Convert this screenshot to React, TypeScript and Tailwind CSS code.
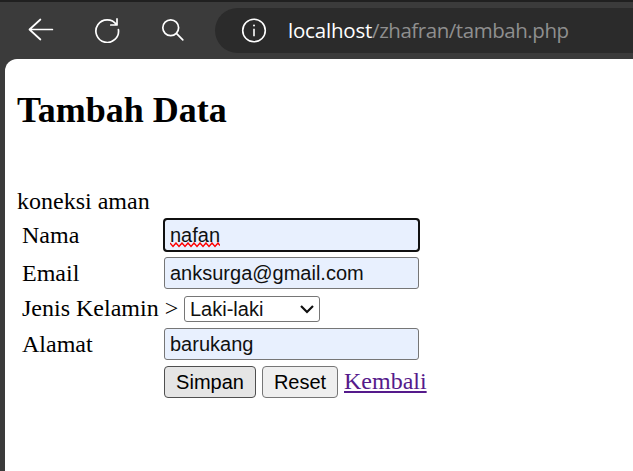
import type { ReactNode } from "react";

const serif = "font-['Liberation_Serif','Times_New_Roman',serif]";
const sans = "font-['Liberation_Sans',Arial,sans-serif]";

function Toolbar() {
  return (
    <header className="flex h-[59px] shrink-0 items-start border-t-2 border-[#202020] bg-[#3b3b3b] pt-[6px]">
      <div className="flex h-[45px] w-[215px] shrink-0 items-center">
        <svg className="mb-px ml-[28px] h-6 w-[26px] shrink-0" viewBox="0 0 26 24" fill="none" stroke="#fff" strokeWidth="1.7" strokeLinecap="round" strokeLinejoin="round">
          <path d="M24.4 11.5H1.5M12.4 1.5 1.5 11.5l10.9 10" />
        </svg>
        <svg className="mb-px ml-[40px] h-[26px] w-[26px] shrink-0" viewBox="0 -0.5 26 26" fill="none" stroke="#fff" strokeWidth="1.7" strokeLinecap="round" strokeLinejoin="round">
          <path d="M24.4 12A11.3 11.3 0 1 1 22.5 7.2M23 1.4v6.1h-6.2" />
        </svg>
        <svg className="mb-px ml-[41px] h-6 w-6 shrink-0" viewBox="0 0 24 24" fill="none" stroke="#fff" strokeWidth="1.7" strokeLinecap="round">
          <circle cx="9.7" cy="9.7" r="7.9" />
          <path d="m15.4 15.4 6.4 6.4" />
        </svg>
      </div>
      <div className="flex h-[45px] flex-1 items-center rounded-l-full bg-[#2b2b2b] whitespace-nowrap">
        <svg className="mb-px ml-[26px] h-[26px] w-[26px] shrink-0" viewBox="0 -0.5 26 26" fill="none" stroke="#fff" strokeWidth="1.6">
          <circle cx="13" cy="13" r="11.3" />
          <path d="M13 11.2v7.6" />
          <circle cx="13" cy="7.9" r="1" fill="#fff" stroke="none" />
        </svg>
        <span className="mb-[2px] ml-[21px] font-['Open_Sans','Noto_Sans',sans-serif] text-[20.5px] leading-[30px] tracking-[-0.45px] text-[#8f8f8f]">
          <span className="tracking-[-0.2px] text-white">localhost</span>/zhafran/tambah.php
        </span>
      </div>
    </header>
  );
}

function Row({ label, children }: { label: string; children: ReactNode }) {
  return (
    <div className="flex h-8 items-center">
      <span className="w-[142px] shrink-0">{label}</span>
      {children}
    </div>
  );
}

const field = `${sans} h-8 w-[255px] rounded-[3px] border border-[#767676] bg-[#e8f0fe] px-[5px] text-[20px] leading-[26px] text-[#101010]`;
const button = `${sans} h-8 rounded-[4px] border text-[20px] leading-[28px] text-black`;

export default function App() {
  return (
    <div className="flex h-[471px] w-[633px] flex-col overflow-hidden bg-[#3b3b3b]">
      <Toolbar />
      <main className={`${serif} ml-[5px] flex-1 rounded-tl-[12px] bg-white pl-[12px] text-[24px] leading-[28px] text-black`}>
        <h2 className="pt-[31px] text-[36px] leading-[41px] font-bold">Tambah Data</h2>
        <p className="mt-[56px] h-[32px]">koneksi aman</p>
        <form className="flex flex-col gap-[6px] pl-[5px]">
          <Row label="Nama">
            <div className="relative">
              <input className={`${field} block outline-2 -outline-offset-1 outline-[#101010]`} defaultValue="nafan" spellCheck={false} />
              <svg className="absolute top-[23px] left-[6px] h-[6px] w-[50px]" viewBox="0 0 50 6" fill="none" stroke="#f00" strokeWidth="1.4">
                <path d="M0 1l3 3.5L6 1l3 3.5L12 1l3 3.5L18 1l3 3.5L24 1l3 3.5L30 1l3 3.5L36 1l3 3.5L42 1l3 3.5L48 1l2 2.5" />
              </svg>
            </div>
          </Row>
          <Row label="Email">
            <input className={field} defaultValue="anksurga@gmail.com" />
          </Row>
          <div className="flex h-[27px] items-end">
            <span className="w-[162px] shrink-0 whitespace-nowrap">Jenis Kelamin &gt;</span>
            <div className="relative">
              <select className={`${sans} block h-[26px] w-[136px] appearance-none rounded-[3px] border border-[#767676] bg-white pl-[5px] text-[20px] leading-[24px] text-[#101010]`}>
                <option>Laki-laki</option>
                <option>Perempuan</option>
              </select>
              <svg className="pointer-events-none absolute top-[9px] right-[6px] h-[9px] w-[14px]" viewBox="0 0 14 9" fill="none" stroke="#101010" strokeWidth="2.2">
                <path d="m1 1 6 6 6-6" />
              </svg>
            </div>
          </div>
          <Row label="Alamat">
            <input className={field} defaultValue="barukang" />
          </Row>
          <div className="flex h-8 items-center gap-[6px] pl-[142px]">
            <button type="button" className={`${button} w-[92px] border-[#4f4f4f] bg-[#e5e5e5]`}>Simpan</button>
            <button type="button" className={`${button} w-[76px] border-[#767676] bg-[#efefef]`}>Reset</button>
            <a className="mb-[2px] text-[#551a8b] underline" href="#">Kembali</a>
          </div>
        </form>
      </main>
    </div>
  );
}
